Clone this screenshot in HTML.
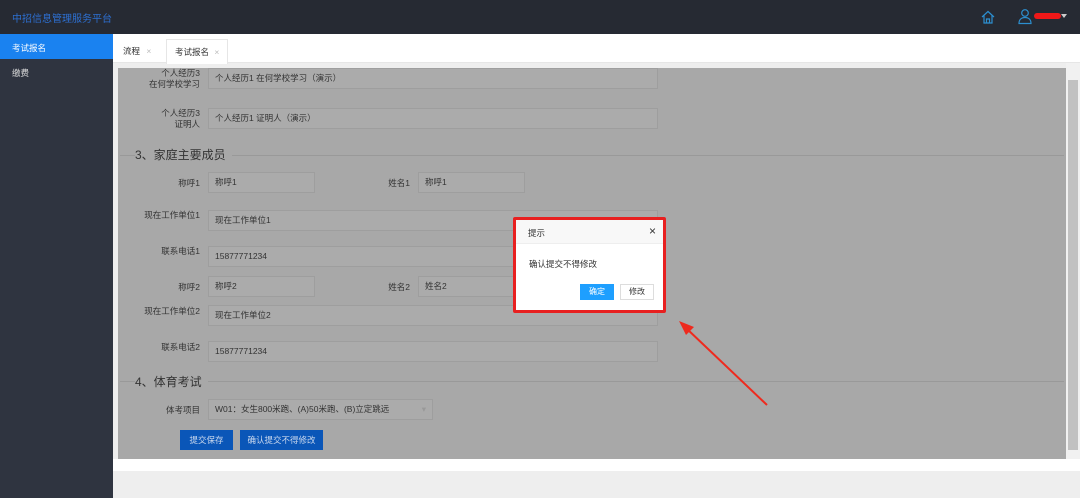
<!DOCTYPE html><html><head><meta charset="utf-8"><style>
*{margin:0;padding:0;box-sizing:border-box}
body{width:1080px;height:498px;overflow:hidden;font-family:"Liberation Sans","Noto Sans CJK SC",sans-serif;font-size:9px;color:#333;background:#eee;position:relative}
.a{position:absolute}
.inp{position:absolute;background:#ababab;border:1px solid #9e9e9e;height:21px;line-height:19px;padding-left:6px;color:#333;font-size:8.5px}
.lbl{position:absolute;text-align:right;width:90px;color:#333;font-size:8.5px;line-height:11px}
.sec{position:absolute;left:135px;font-size:12px;color:#333}
.line{position:absolute;height:1px;background:#999;left:120px;width:944px}
.btn{position:absolute;background:#0a56b8;color:#c9d8ee;font-size:8.5px;text-align:center;line-height:20px;height:20px}
</style></head><body>
<div class="a" style="left:0;top:0;width:1080px;height:34px;background:#262a33"></div>
<div class="a" style="left:12px;top:10px;color:#2d6fd0;font-size:10px">中招信息管理服务平台</div>
<svg class="a" style="left:980px;top:9px" width="16" height="16" viewBox="0 0 16 16" fill="none" stroke="#2c8fd0" stroke-width="1.2"><path d="M2 8L8 2.5L14 8M4 6.5V14H12V6.5M6.5 14V10H9.5V14"/></svg>
<svg class="a" style="left:1017px;top:8px" width="16" height="17" viewBox="0 0 16 17" fill="none" stroke="#2c8fd0" stroke-width="1.2"><circle cx="8" cy="5" r="3.3"/><path d="M2 15.5C2 11 5 9.5 8 9.5S14 11 14 15.5Z"/></svg>
<div class="a" style="left:1034px;top:13px;width:27px;height:6px;background:#f01818;border-radius:3px"></div>
<div class="a" style="left:1061px;top:14px;border:3px solid transparent;border-top:4px solid #ccc"></div>
<div class="a" style="left:0;top:34px;width:113px;height:464px;background:#2f3440"></div>
<div class="a" style="left:0;top:34px;width:113px;height:25px;background:#1a82f0;color:#fff;padding:8px 0 0 12px;font-size:8.5px">考试报名</div>
<div class="a" style="left:12px;top:67px;color:#ddd;font-size:8.5px">缴费</div>
<div class="a" style="left:113px;top:34px;width:967px;height:29px;background:#fff;border-bottom:1px solid #e6e6e6"></div>
<div class="a" style="left:123px;top:45px;font-size:8.5px">流程 <span style="color:#bbb;margin-left:4px">×</span></div>
<div class="a" style="left:166px;top:39px;width:62px;height:25px;background:#fff;border:1px solid #e6e6e6;border-bottom:none;padding:6px 0 0 8px;font-size:8.5px">考试报名 <span style="color:#bbb;margin-left:3px">×</span></div>
<div class="a" style="left:118px;top:68px;width:948px;height:391px;background:#a8a8a8"></div>
<div class="a" style="left:1066px;top:63px;width:14px;height:396px;background:#f1f1f1"></div>
<div class="a" style="left:1068px;top:80px;width:10px;height:370px;background:#c1c1c1"></div>
<div class="a" style="left:113px;top:459px;width:967px;height:12px;background:#fff"></div>
<div class="lbl" style="left:110px;top:68px">个人经历3<br>在何学校学习</div><div class="inp" style="left:208px;top:68px;width:450px">个人经历1 在何学校学习（演示）</div>
<div class="lbl" style="left:110px;top:108px">个人经历3<br>证明人</div><div class="inp" style="left:208px;top:108px;width:450px">个人经历1 证明人（演示）</div>
<div class="line" style="top:155px"></div><div class="sec" style="top:146px;background:#a8a8a8;padding-right:6px">3、家庭主要成员</div>
<div class="lbl" style="left:110px;top:178px">称呼1</div><div class="inp" style="left:208px;top:172px;width:107px">称呼1</div>
<div class="lbl" style="left:320px;top:178px">姓名1</div><div class="inp" style="left:418px;top:172px;width:107px">称呼1</div>
<div class="lbl" style="left:110px;top:210px">现在工作单位1</div><div class="inp" style="left:208px;top:210px;width:450px">现在工作单位1</div>
<div class="lbl" style="left:110px;top:246px">联系电话1</div><div class="inp" style="left:208px;top:246px;width:450px">15877771234</div>
<div class="lbl" style="left:110px;top:282px">称呼2</div><div class="inp" style="left:208px;top:276px;width:107px">称呼2</div>
<div class="lbl" style="left:320px;top:282px">姓名2</div><div class="inp" style="left:418px;top:276px;width:240px">姓名2</div>
<div class="lbl" style="left:110px;top:306px">现在工作单位2</div><div class="inp" style="left:208px;top:305px;width:450px">现在工作单位2</div>
<div class="lbl" style="left:110px;top:342px">联系电话2</div><div class="inp" style="left:208px;top:341px;width:450px">15877771234</div>
<div class="line" style="top:381px"></div><div class="sec" style="top:373px;background:#a8a8a8;padding-right:6px">4、体育考试</div>
<div class="lbl" style="left:110px;top:405px">体考项目</div><div class="inp" style="left:208px;top:399px;width:225px">W01：女生800米跑、(A)50米跑、(B)立定跳远<span style="position:absolute;right:6px;color:#999">▾</span></div>
<div class="btn" style="left:180px;top:430px;width:53px">提交保存</div>
<div class="btn" style="left:240px;top:430px;width:83px">确认提交不得修改</div>
<div class="a" style="left:513px;top:217px;width:153px;height:96px;border:3px solid #e82020;border-radius:2px"></div>
<div class="a" style="left:516px;top:220px;width:147px;height:90px;background:#fff">
<div style="height:24px;background:#f8f8f8;border-bottom:1px solid #eee;padding:7px 0 0 12px;font-size:8.5px">提示<span style="position:absolute;right:7px;top:4px;font-size:12px">×</span></div>
<div style="padding:14px 0 0 13px;font-size:8.5px">确认提交不得修改</div>
<div style="position:absolute;left:64px;top:64px;width:34px;height:16px;background:#1e9fff;color:#fff;text-align:center;line-height:16px;font-size:8px">确定</div>
<div style="position:absolute;left:104px;top:64px;width:34px;height:16px;border:1px solid #ddd;text-align:center;line-height:14px;font-size:8px">修改</div>
</div>
<svg class="a" style="left:0;top:0" width="1080" height="498"><line x1="767" y1="405" x2="686" y2="328" stroke="#ee2a1e" stroke-width="2"/><path d="M679 321L694 327L686 335Z" fill="#ee2a1e"/></svg>
</body></html>
